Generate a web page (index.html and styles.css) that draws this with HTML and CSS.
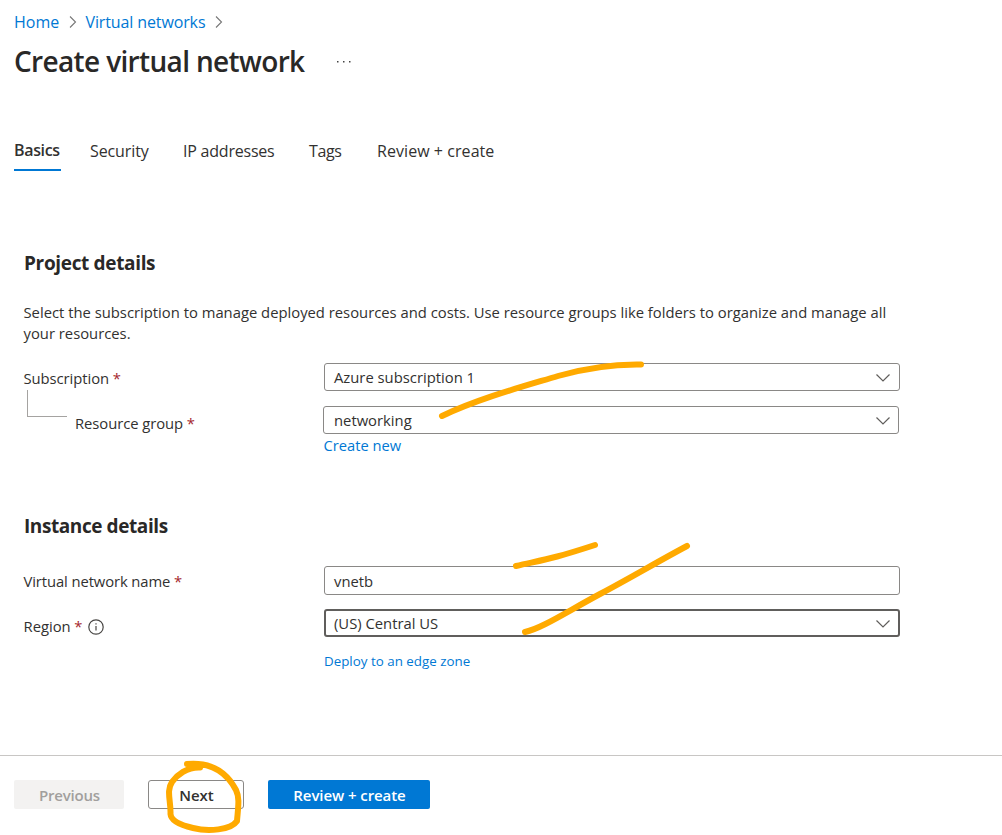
FILE: index.html
```html
<!DOCTYPE html>
<html lang="en">
<head>
<meta charset="utf-8">
<title>Create virtual network</title>
<link rel="stylesheet" href="styles.css">
</head>
<body>
<div class="page">
  <header class="header">
    <nav class="crumbs">
      <a class="crumb crumb-home">Home</a>
      <svg class="crumb-sep" viewBox="0 0 8 12"><path d="M1 .5 6.500 6 1 11.500"/></svg>
      <a class="crumb crumb-vnets">Virtual networks</a>
      <svg class="crumb-sep" viewBox="0 0 8 12"><path d="M1 .5 6.500 6 1 11.500"/></svg>
    </nav>
    <div class="title-row">
      <h1 class="title">Create virtual network</h1>
      <svg class="more" viewBox="0 0 14 2"><path d="M0 0h1.500v1.500H0zM6 0h1.500v1.500H6zM12 0h1.500v1.500H12z"/></svg>
    </div>
  </header>
  <nav class="tabs">
    <a class="tab tab-active">Basics</a>
    <a class="tab tab-security">Security</a>
    <a class="tab tab-ip">IP addresses</a>
    <a class="tab tab-tags">Tags</a>
    <a class="tab tab-review">Review + create</a>
  </nav>
  <main class="form">
    <section class="project">
      <h2 class="heading">Project details</h2>
      <p class="intro">Select the subscription to manage deployed resources and costs. Use resource groups like folders to organize and manage all<br>your resources.</p>
      <div class="row">
        <div class="label">Subscription <span class="req">*</span></div>
        <div class="box"><span class="value">Azure subscription 1</span><svg class="chevron" viewBox="0 0 14 8"><path d="M.5.5 7 7 13.500 .5"/></svg></div>
      </div>
      <div class="row row-group">
        <div class="label label-child"><span class="branch"></span><span class="child-text">Resource group <span class="req">*</span></span></div>
        <div class="box box-group"><span class="value">networking</span><svg class="chevron" viewBox="0 0 14 8"><path d="M.5.5 7 7 13.500 .5"/></svg></div>
      </div>
      <a class="link create-new">Create new</a>
    </section>
    <section class="instance">
      <h2 class="heading heading-instance">Instance details</h2>
      <div class="row row-name">
        <div class="label label-name">Virtual network name <span class="req">*</span></div>
        <div class="box box-name"><span class="value">vnetb</span></div>
      </div>
      <div class="row row-region">
        <div class="label label-region">Region <span class="req">*</span>
          <svg class="info" viewBox="0 0 16 16"><circle cx="8" cy="8" r="7.200"/><path d="M8 7v4.500M8 4.300v1.300"/></svg>
        </div>
        <div class="box box-focus"><span class="value">(US) Central US</span><svg class="chevron" viewBox="0 0 14 8"><path d="M.5.5 7 7 13.500 .5"/></svg></div>
      </div>
      <a class="link edge">Deploy to an edge zone</a>
    </section>
  </main>
  <footer class="footer">
    <button class="btn btn-prev" disabled>Previous</button>
    <button class="btn btn-next">Next</button>
    <button class="btn btn-primary">Review + create</button>
  </footer>
  <svg class="ink" viewBox="0 0 1002 835">
    <path d="M442 416C480 398 525 386 558 376C586 368 612 364 641 364.500"/>
    <path d="M516 566C547 559 552 559 595 545"/>
    <path d="M525 632C542 628 563 614 600 594C632 577 657 562 687 546"/>
    <path d="M200 767.500C194 768 191 764 187 764C209 762 226 771 236 790C240 798 238 808 237 821C231 830 208 832 193 828C180 825 171 821 170.500 814C171 801 166 791 172 782C177 775 187 767 200 767.500"/>
  </svg>
</div>
</body>
</html>
```
FILE: styles.css
```css
* { box-sizing: border-box; }
body { margin: 0; background: #fff; color: #323130; font: 14.800px/20px "Open Sans", "Noto Sans", sans-serif; }
.page { position: relative; width: 1002px; height: 835px; overflow: hidden; display: flex; flex-direction: column; }
h1, h2, p { margin: 0; }
a { color: #0078d4; white-space: nowrap; }
.header { height: 130px; padding: 11px 14px 0; }
.crumbs { display: flex; align-items: center; height: 22px; font-size: 16px; }
.crumb-home { width: 46px; }
.crumb-vnets { width: 121px; letter-spacing: -.12px; }
.crumb-sep { width: 8px; height: 12px; margin: 0 9px 0 8.500px; fill: none; stroke: #777; stroke-width: 1.100; }
.title-row { display: flex; align-items: center; height: 40px; margin-top: 8px; }
.title { width: 322px; font-size: 28px; line-height: 40px; font-weight: 600; letter-spacing: -.65px; color: #292827; white-space: nowrap; }
.more { width: 14px; height: 2px; margin: 2px 0 0 .5px; fill: #444; }
.tabs { display: flex; height: 41px; padding-left: 14px; font-size: 16px; line-height: 42px; }
.tab { color: #323130; }
.tab-active { width: 47px; height: 41px; line-height: 40px; font-weight: 600; letter-spacing: -.35px; border-bottom: 2px solid #0078d4; margin-right: 29px; }
.tab-security { width: 93px; letter-spacing: -.1px; }
.tab-ip { width: 126px; letter-spacing: -.22px; }
.tab-tags { width: 68px; letter-spacing: -.35px; }
.tab-review { letter-spacing: .06px; }
.form { height: 584px; padding: 79px 0 0 24px; }
.project { height: 263px; }
.heading { font-size: 19px; line-height: 26px; font-weight: 700; letter-spacing: -.34px; color: #292827; }
.heading-instance { letter-spacing: -.42px; }
.intro { height: 42px; margin: 26px 0 0 -.5px; line-height: 21px; white-space: nowrap; }
.row { display: flex; height: 28px; margin-top: 19px; }
.label { width: 300px; padding-top: 5px; text-indent: -.5px; letter-spacing: -.06px; white-space: nowrap; }
.req { color: #a4262c; }
.box { display: flex; align-items: center; justify-content: space-between; width: 576px; height: 28px; padding: 0 9.500px 0 9px; border: 1px solid #8a8886; border-radius: 3px; white-space: nowrap; }
.chevron { width: 14px; height: 8px; margin-top: 1px; fill: none; stroke: #605e5c; stroke-width: 1.200; }
.row-group { margin-top: 15px; }
.label-child { display: flex; width: 299px; padding: 0 0 0 3px; text-indent: 0; }
.branch { width: 40px; height: 27px; margin: -16px 8px 0 0; border-left: 1px solid #a5a3a1; border-bottom: 1px solid #a5a3a1; }
.child-text { padding-top: 7px; }
.box-group { padding: 0 8.500px 0 10px; }
.link { display: block; margin-left: 300px; }
.create-new { margin: 1px 0 0 299.500px; font-size: 14.700px; }
.row-name { height: 29px; margin-top: 27px; }
.label-name { letter-spacing: -.1px; }
.box-name { height: 29px; padding-top: 1px; }
.row-region { margin-top: 14px; }
.label-region { display: flex; padding-top: 7px; gap: 4px; letter-spacing: 0; }
.info { width: 16px; height: 16px; margin: 3px 0 0 1.500px; fill: none; stroke: #484644; stroke-width: 1.200; }
.box-focus { border: 2px solid #605e5c; padding: 0 8.500px 0 8px; }
.edge { margin-top: 14px; font-size: 13.370px; }
.footer { display: flex; align-items: flex-start; height: 80px; padding: 24px 14px 0; border-top: 1px solid #c8c6c4; }
.btn { height: 29px; padding: 2px 0 0 1px; border: 0; border-radius: 2px; font: 600 15px/27px "Open Sans", "Noto Sans", sans-serif; letter-spacing: -.08px; }
.btn-prev { width: 110px; background: #f3f2f1; color: #a19f9d; letter-spacing: -.2px; }
.btn-next { width: 96px; margin: 0 24px; background: #fff; color: #323130; border: 1px solid #8a8886; line-height: 25px; border-radius: 3px; }
.btn-primary { width: 162px; background: #0078d4; color: #fff; }
.ink { position: absolute; inset: 0; width: 1002px; height: 835px; fill: none; stroke: #ffaa00; stroke-width: 6; stroke-linecap: round; stroke-linejoin: round; pointer-events: none; }
```
